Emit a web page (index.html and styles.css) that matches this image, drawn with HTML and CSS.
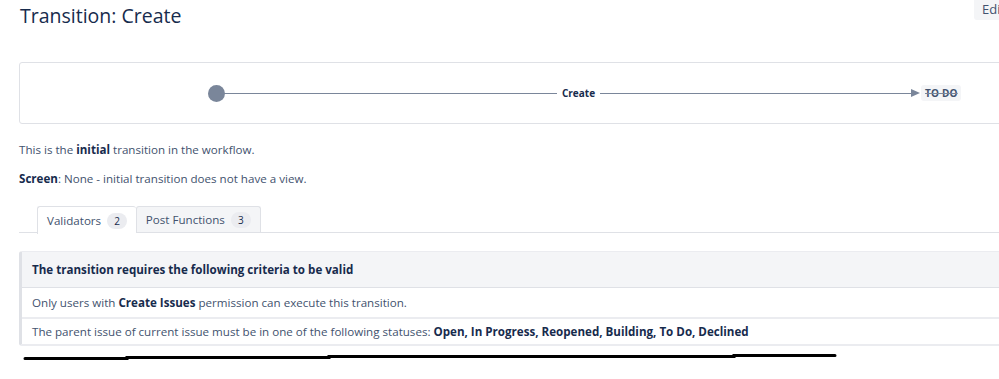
FILE: index.html
```html
<!DOCTYPE html>
<html>
<head>
<meta charset="utf-8">
<link rel="stylesheet" href="styles.css">
</head>
<body>
<div class="page">
  <div class="header">
    <h1 class="title">Transition: Create</h1>
    <button class="edit-btn">Edit</button>
  </div>

  <div class="diagram">
    <span class="node-start"></span>
    <div class="edge">
      <span class="edge-label">Create</span>
    </div>
    <span class="arrow-head"></span>
    <span class="status">TO DO</span>
  </div>

  <p class="info">This is the <b>initial</b> transition in the workflow.</p>
  <p class="info"><b>Screen</b>: None - initial transition does not have a view.</p>

  <div class="tabs">
    <div class="tab tab-active">Validators <span class="badge">2</span></div>
    <div class="tab">Post Functions <span class="badge">3</span></div>
  </div>

  <div class="criteria">
    <div class="criteria-head">The transition requires the following criteria to be valid</div>
    <div class="criteria-row">Only users with <b>Create Issues</b> permission can execute this transition.</div>
    <div class="criteria-row">The parent issue of current issue must be in one of the following statuses: <b>Open, In Progress, Reopened, Building, To Do, Declined</b></div>
  </div>

  <svg class="scribble" width="830" height="8" viewBox="0 0 830 8">
    <polyline points="6,6.5 108,6.5 108,5.5 310,5.5 310,4.5 715,4.5 715,3.5 816,3.5" fill="none" stroke="#000" stroke-width="3" stroke-linecap="round"/>
  </svg>
</div>
</body>
</html>
```

FILE: styles.css
```css
html, body {
  margin: 0;
  padding: 0;
  background: #fff;
  overflow: hidden;
}
body {
  font-family: "Open Sans", "Noto Sans", sans-serif;
  color: #42526E;
  font-size: 11.6px;
}
.page {
  width: 992px;
  padding-left: 19px;
}
b { color: #172B4D; font-weight: 700; }

.header {
  display: flex;
  justify-content: space-between;
  align-items: flex-start;
  height: 38px;
}
.title {
  margin: 3px 0 0 1px;
  font-size: 19.5px;
  line-height: 26px;
  font-weight: 400;
  color: #172B4D;
}
.edit-btn {
  margin-top: -8px;
  margin-right: -11px;
  width: 48px;
  text-align: left;
  border: none;
  border-radius: 3px;
  background: #F4F5F7;
  color: #42526E;
  font-family: inherit;
  font-size: 13px;
  padding: 8px 0 6px 8px;
  height: 28px;
}

.diagram {
  margin-top: 24px;
  height: 60px;
  border: 1px solid #DFE1E6;
  border-radius: 3px;
  display: flex;
  align-items: center;
  padding-left: 188px;
}
.node-start {
  width: 17px;
  height: 17px;
  border-radius: 50%;
  background: #7A869A;
  flex: none;
}
.edge {
  width: 687px;
  height: 1px;
  background: #7A869A;
  display: flex;
  justify-content: center;
  align-items: center;
  margin-left: -1px;
}
.edge-label {
  background: #fff;
  padding: 0 5px;
  font-size: 10px;
  font-weight: 700;
  color: #172B4D;
  line-height: 14px;
  margin-left: 22px;
}
.arrow-head {
  width: 0;
  height: 0;
  border-top: 4px solid transparent;
  border-bottom: 4px solid transparent;
  border-left: 9px solid #7A869A;
  flex: none;
}
.status {
  margin-left: 1px;
  background: #F4F5F7;
  border-radius: 3px;
  padding: 2px 3px 2px 4px;
  font-size: 10px;
  font-weight: 700;
  color: #42526E;
  line-height: 12px;
  letter-spacing: 0.2px;
  text-decoration: line-through;
  text-decoration-color: #7A869A;
  text-decoration-thickness: 1px;
}

.info {
  margin: 0;
  line-height: 18px;
}
.diagram + .info { margin-top: 17px; }
.info + .info { margin-top: 11px; }

.tabs {
  margin-top: 18px;
  display: flex;
  padding-left: 18px;
  border-bottom: 1px solid #DFE1E6;
  height: 26px;
}
.tab {
  display: flex;
  align-items: center;
  gap: 6px;
  padding: 0 9px 0 9px;
  background: #F4F5F7;
  border: 1px solid #DFE1E6;
  border-bottom: none;
  border-radius: 3px 3px 0 0;
  line-height: 26px;
  color: #42526E;
}
.tab-active {
  background: #fff;
  height: 27px;
  border-right: none;
}
.badge {
  display: inline-block;
  background: #EBECF0;
  border-radius: 8px;
  font-size: 10px;
  line-height: 16px;
  padding: 0 7px;
  color: #172B4D;
}

.criteria {
  margin-top: 18px;
  border-top: 1px solid #EBECF0;
  border-left: 3px solid #DFE1E6;
  border-bottom: 2px solid #EBECF0;
  border-radius: 3px 0 0 3px;
}
.criteria-head {
  background: #F4F5F7;
  font-weight: 700;
  color: #172B4D;
  height: 35px;
  line-height: 35px;
  padding-left: 10px;
  border-bottom: 1px solid #DFE1E6;
}
.criteria-row {
  padding-left: 10px;
  height: 29px;
  line-height: 29px;
}
.criteria-row + .criteria-row {
  border-top: 2px solid #EBECF0;
  height: 25px;
  line-height: 25px;
}

.scribble {
  display: block;
  margin-top: 6px;
}
```
